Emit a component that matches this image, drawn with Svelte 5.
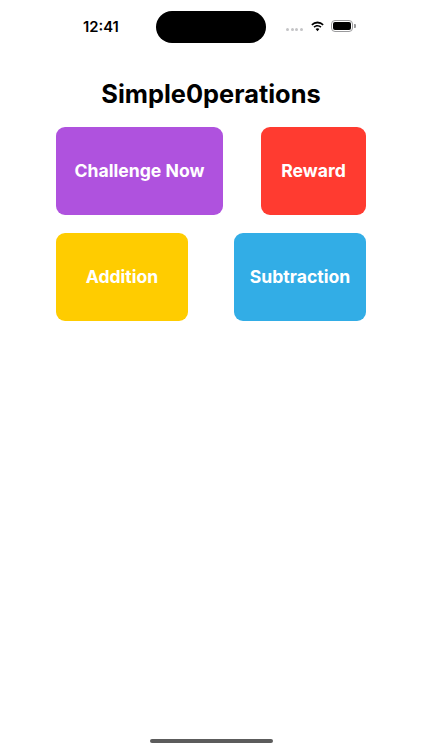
<script>
  const rows = [
    [
      { label: "Challenge Now", color: "#af52de", width: 167 },
      { label: "Reward", color: "#ff3b30", width: 105 },
    ],
    [
      { label: "Addition", color: "#ffcc00", width: 132 },
      { label: "Subtraction", color: "#32ade6", width: 132 },
    ],
  ];
</script>

<div class="screen">
  <div class="status-bar">
    <span class="time">12:41</span>
    <div class="island"></div>
    <div class="status-icons">
      <div class="dots">
        <i></i><i></i><i></i><i></i>
      </div>
      <svg class="wifi" width="15" height="11" viewBox="0 0 14 11">
        <path d="M7 2.4c2 0 3.8.8 5.100 2l1.100-1.200A9 9 0 0 0 7 .6 9 9 0 0 0 .8 3.200l1.100 1.200A7.400 7.400 0 0 1 7 2.400z" />
        <path d="M7 5.600c1.100 0 2.100.4 2.900 1.100l1.100-1.200A5.800 5.800 0 0 0 7 3.900c-1.500 0-2.900.6-4 1.600l1.100 1.200C4.900 6 5.900 5.600 7 5.600z" />
        <path d="M7 7.300c-.8 0-1.400.3-1.900.7L7 10.200 8.900 8c-.5-.4-1.100-.7-1.900-.7z" />
      </svg>
      <div class="battery">
        <div class="battery-body"><div class="battery-fill"></div></div>
        <div class="battery-cap"></div>
      </div>
    </div>
  </div>

  <h1 class="title">Simple0perations</h1>

  <div class="rows">
    {#each rows as row}
      <div class="row">
        {#each row as btn}
          <button class="btn" style="background: {btn.color}; width: {btn.width}px">{btn.label}</button>
        {/each}
      </div>
    {/each}
  </div>

  <div class="home-bar"></div>
</div>

<style>
  :global(body) {
    margin: 0;
    background: #fff;
  }
  .screen {
    width: 422px;
    height: 750px;
    display: flex;
    flex-direction: column;
    font-family: Inter, "Liberation Sans", sans-serif;
    overflow: hidden;
  }
  .status-bar {
    padding-top: 10px;
    display: flex;
    align-items: center;
    height: 33px;
  }
  .time {
    width: 73px;
    margin-left: 83px;
    font-size: 14.800px;
    font-weight: 600;
    color: #000;
  }
  .island {
    width: 110px;
    height: 32px;
    background: #000;
    border-radius: 16px;
  }
  .status-icons {
    display: flex;
    align-items: center;
    margin-left: 20px;
    margin-top: -1px;
  }
  .dots {
    display: flex;
    gap: 1.500px;
    margin-right: 7px;
    margin-top: 6px;
  }
  .dots i {
    width: 3px;
    height: 3px;
    border-radius: 50%;
    background: #c4c4c6;
  }
  .wifi {
    fill: #000;
    margin-right: 6.500px;
  }
  .battery {
    display: flex;
    align-items: center;
  }
  .battery-body {
    width: 22px;
    height: 12px;
    border: 1px solid #9a9a9c;
    border-radius: 4px;
    padding: 1px;
    box-sizing: border-box;
  }
  .battery-fill {
    width: 100%;
    height: 100%;
    background: #000;
    border-radius: 2px;
  }
  .battery-cap {
    width: 1.500px;
    height: 4px;
    margin-left: 1px;
    background: #9a9a9c;
    border-radius: 0 1px 1px 0;
  }
  .title {
    margin: 0;
    margin-top: 35px;
    text-align: center;
    font-size: 25.400px;
    line-height: 32px;
    font-weight: 700;
    color: #000;
  }
  .rows {
    margin-top: 17px;
    padding: 0 56px;
    display: flex;
    flex-direction: column;
    gap: 18px;
  }
  .row {
    display: flex;
    justify-content: space-between;
  }
  .btn {
    height: 88px;
    border: none;
    border-radius: 9px;
    color: #fff;
    font-family: inherit;
    font-size: 17.600px;
    font-weight: 700;
    padding: 0 0 2px;
  }
  .home-bar {
    position: absolute;
    left: 150px;
    top: 739px;
    width: 123px;
    height: 4px;
    background: #5c5c5c;
    border-radius: 2px;
  }
</style>
